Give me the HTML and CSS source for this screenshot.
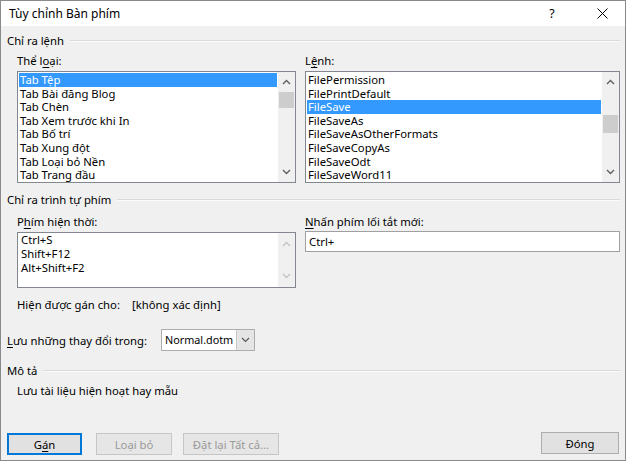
FILE: index.html
```html
<!DOCTYPE html>
<html lang="vi">
<head>
<meta charset="utf-8">
<title>Tùy chỉnh Bàn phím</title>
<link rel="stylesheet" href="styles.css">
</head>
<body>
<div class="window">
  <div class="titlebar">
    <span class="title">Tùy chỉnh Bàn phím</span>
    <span class="tbtn help">?</span>
    <span class="tbtn close">
      <svg width="11" height="11" viewBox="0 0 11 11"><path d="M0.5 0.5 L10.5 10.5 M10.5 0.5 L0.5 10.5" stroke="#000" stroke-width="1" fill="none"/></svg>
    </span>
  </div>
  <div class="body">
    <div class="ghead"><span>Chỉ ra lệnh</span><div class="rule"></div></div>
    <div class="grid top">
      <div class="col">
        <div class="label">Thể l<u>o</u>ại:</div>
        <div class="listbox tall">
          <div class="items">
            <div class="item sel">Tab Tệp</div>
            <div class="item">Tab Bài đăng Blog</div>
            <div class="item">Tab Chèn</div>
            <div class="item">Tab Xem trước khi In</div>
            <div class="item">Tab Bố trí</div>
            <div class="item">Tab Xung đột</div>
            <div class="item">Tab Loại bỏ Nền</div>
            <div class="item">Tab Trang đầu</div>
          </div>
          <div class="sbar">
            <div class="arrow"><svg width="9" height="6" viewBox="0 0 9 6"><path d="M1 5 L4.5 1.5 L8 5" stroke="#606060" stroke-width="1.4" fill="none"/></svg></div>
            <div class="track"><div class="thumb t1"></div></div>
            <div class="arrow"><svg width="9" height="6" viewBox="0 0 9 6"><path d="M1 1 L4.5 4.5 L8 1" stroke="#606060" stroke-width="1.4" fill="none"/></svg></div>
          </div>
        </div>
      </div>
      <div class="col">
        <div class="label">L<u>ệ</u>nh:</div>
        <div class="listbox tall">
          <div class="items">
            <div class="item">FilePermission</div>
            <div class="item">FilePrintDefault</div>
            <div class="item sel">FileSave</div>
            <div class="item">FileSaveAs</div>
            <div class="item">FileSaveAsOtherFormats</div>
            <div class="item">FileSaveCopyAs</div>
            <div class="item">FileSaveOdt</div>
            <div class="item">FileSaveWord11</div>
          </div>
          <div class="sbar">
            <div class="arrow"><svg width="9" height="6" viewBox="0 0 9 6"><path d="M1 5 L4.5 1.5 L8 5" stroke="#606060" stroke-width="1.4" fill="none"/></svg></div>
            <div class="track"><div class="thumb t2"></div></div>
            <div class="arrow"><svg width="9" height="6" viewBox="0 0 9 6"><path d="M1 1 L4.5 4.5 L8 1" stroke="#606060" stroke-width="1.4" fill="none"/></svg></div>
          </div>
        </div>
      </div>
    </div>

    <div class="ghead g2"><span>Chỉ ra trình tự phím</span><div class="rule"></div></div>
    <div class="grid keys">
      <div class="col">
        <div class="label">P<u>h</u>ím hiện thời:</div>
        <div class="listbox short">
          <div class="items">
            <div class="kitem">Ctrl+S</div>
            <div class="kitem">Shift+F12</div>
            <div class="kitem">Alt+Shift+F2</div>
          </div>
          <div class="sbar off">
            <div class="arrow"><svg width="9" height="6" viewBox="0 0 9 6"><path d="M1 5 L4.5 1.5 L8 5" stroke="#c4c4c4" stroke-width="1.4" fill="none"/></svg></div>
            <div class="track"></div>
            <div class="arrow"><svg width="9" height="6" viewBox="0 0 9 6"><path d="M1 1 L4.5 4.5 L8 1" stroke="#c4c4c4" stroke-width="1.4" fill="none"/></svg></div>
          </div>
        </div>
      </div>
      <div class="col">
        <div class="label"><u>N</u>hấn phím lối tắt mới:</div>
        <div class="input">Ctrl+</div>
      </div>
    </div>

    <div class="assigned"><span class="alabel">Hiện được gán cho:</span><span>[không xác định]</span></div>

    <div class="saverow">
      <span class="slabel"><u>L</u>ưu những thay đổi trong:</span>
      <div class="combo">
        <span class="cval">Normal.dotm</span>
        <span class="cbtn"><svg width="9" height="6" viewBox="0 0 9 6"><path d="M1 1 L4.5 4.5 L8 1" stroke="#555" stroke-width="1.1" fill="none"/></svg></span>
      </div>
    </div>

    <div class="ghead g3"><span>Mô tả</span><div class="rule"></div></div>
    <div class="desc">Lưu tài liệu hiện hoạt hay mẫu</div>

    <div class="buttons">
      <button class="btn def">G<u>á</u>n</button>
      <button class="btn dis b2">Loại bỏ</button>
      <button class="btn dis b3">Đặt lại Tất cả...</button>
      <span class="spacer"></span>
      <button class="btn close-btn">Đóng</button>
    </div>
  </div>
</div>
</body>
</html>
```

FILE: styles.css
```css
html, body {
  margin: 0;
  padding: 0;
}
body {
  width: 626px;
  height: 461px;
  background: #f0f0f0;
  font-family: "Noto Sans", "Open Sans", sans-serif;
  font-size: 11.3px;
  color: #000;
  overflow: hidden;
}
u { text-decoration: underline; text-underline-offset: 2px; }

.window {
  box-sizing: border-box;
  width: 626px;
  height: 461px;
  border: 1px solid #8a8a8a;
  display: flex;
  flex-direction: column;
  background: #f0f0f0;
}

.titlebar {
  flex: none;
  height: 25px;
  background: #fff;
  display: flex;
  align-items: center;
}
.title {
  flex: 1;
  margin-left: 8px;
  font-size: 12px;
}
.tbtn {
  width: 46px;
  height: 25px;
  display: flex;
  align-items: center;
  justify-content: center;
}
.help {
  margin-right: 4px;
  margin-left: 2px;
  font-size: 12.5px;
}

.body {
  flex: 1;
  display: flex;
  flex-direction: column;
  padding: 7px 5px 5px 6px;
}

.ghead {
  height: 16px;
  line-height: 16px;
  display: flex;
  align-items: center;
}
.ghead .rule {
  flex: 1;
  height: 1px;
  background: #d9d9d9;
  border-bottom: 1px solid #fbfbfb;
  margin-left: 6px;
}
.g2 { margin-top: 9px; }
.g3 { margin-top: 12px; }

.grid {
  display: grid;
  grid-template-columns: 279px 315px;
  column-gap: 9px;
  margin-left: 10px;
}
.grid.top { margin-top: 4px; }
.grid.keys { margin-top: 6px; }

.label {
  height: 16px;
  line-height: 16px;
  margin-bottom: 2px;
}

.listbox {
  box-sizing: border-box;
  border: 1px solid #828790;
  background: #fff;
  display: flex;
  overflow: hidden;
}
.listbox.tall { height: 112px; }
.listbox.short { height: 56px; }

.items {
  flex: 1;
  padding: 1px 1px 0 1px;
  overflow: hidden;
}
.item {
  height: 13.6px;
  line-height: 13.6px;
  padding-left: 1px;
  white-space: nowrap;
}
.item.sel {
  background: #3399ff;
  color: #fff;
}
.kitem {
  height: 14px;
  line-height: 14px;
  padding-left: 2px;
  white-space: nowrap;
}
.listbox.short .items { padding-top: 0; }

.sbar {
  flex: none;
  width: 17px;
  background: #f0f0f0;
  display: flex;
  flex-direction: column;
}
.sbar .arrow {
  height: 20px;
  display: flex;
  align-items: center;
  justify-content: center;
  flex: none;
}
.sbar .track {
  flex: 1;
}
.thumb {
  margin: 0 1px;
  background: #cdcdcd;
}
.t1 { height: 16px; }
.t2 { height: 18px; margin-top: 23px; }
.sbar.off .arrow { height: 22px; }

.input {
  box-sizing: border-box;
  height: 21px;
  margin-top: -1px;
  border: 1px solid #a0a0a0;
  background: #fff;
  line-height: 19px;
  padding-left: 3px;
}

.assigned {
  margin-top: 9px;
  margin-left: 10px;
  height: 16px;
  line-height: 16px;
  display: flex;
}
.alabel { width: 115px; }

.saverow {
  margin-top: 16px;
  height: 22px;
  display: flex;
  align-items: center;
}
.slabel { width: 154px; }
.combo {
  box-sizing: border-box;
  width: 94px;
  height: 22px;
  border: 1px solid #adadad;
  background: #fff;
  display: flex;
}
.cval {
  flex: 1;
  line-height: 20px;
  padding-left: 3px;
  font-size: 10.8px;
  white-space: nowrap;
  overflow: hidden;
}
.cbtn {
  flex: none;
  width: 17px;
  background: #e5e5e5;
  border-left: 1px solid #c8c8c8;
  display: flex;
  align-items: center;
  justify-content: center;
}

.desc {
  margin-top: 4px;
  margin-left: 10px;
  height: 16px;
  line-height: 16px;
}

.buttons {
  margin-top: auto;
  display: flex;
  align-items: flex-end;
}
.btn {
  box-sizing: border-box;
  height: 22px;
  font-family: inherit;
  font-size: inherit;
  padding: 0;
  background: #e1e1e1;
  border: 1px solid #adadad;
  color: #000;
}
.btn.def {
  width: 75px;
  border: 2px solid #0078d7;
}
.btn.dis {
  background: #e6e6e6;
  border-color: #c6c6c6;
  color: #9a9a9a;
}
.b2 { width: 76px; margin-left: 14px; }
.b3 { width: 96px; margin-left: 11px; }
.spacer { flex: 1; }
.close-btn {
  width: 78px;
  margin-right: 1px;
  margin-bottom: 1px;
}
```
